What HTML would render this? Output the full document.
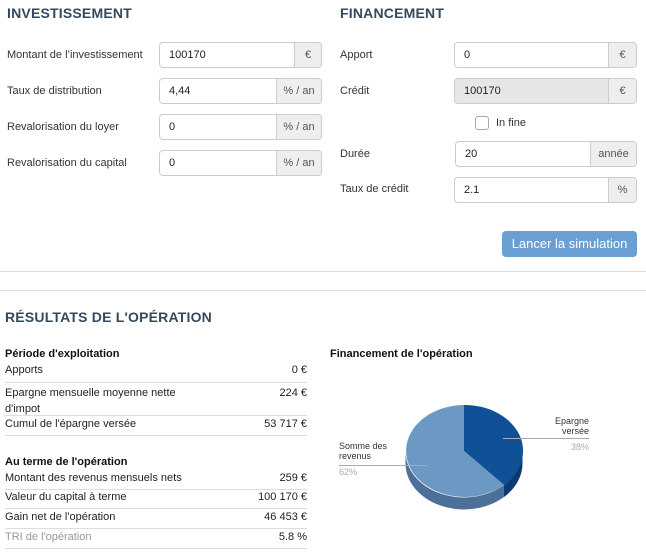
<!DOCTYPE html>
<html><head><meta charset="utf-8"><style>
*{margin:0;padding:0;box-sizing:border-box}
body{width:646px;height:555px;background:#fff;font-family:"Liberation Sans",sans-serif;color:#333;position:relative;overflow:hidden;font-size:11px}
.a{position:absolute;white-space:nowrap}
h2{position:absolute;font-size:14px;font-weight:bold;color:#34495e;letter-spacing:.2px}
.lbl{position:absolute;font-size:11px;color:#333}
.in{position:absolute;height:26px;border:1px solid #ccc;border-radius:4px;background:#fff;overflow:hidden}
.in span.v{position:absolute;left:9px;top:6px;font-size:11px;color:#222}
.in .ad{position:absolute;right:0;top:0;bottom:0;background:#eee;border-left:1px solid #ccc;font-size:11px;color:#555;text-align:center;line-height:24px}
.row{position:absolute;left:5px;width:302px;border-bottom:1px solid #ddd;font-size:11px;color:#222}
.row b{font-weight:normal}
.row i{font-style:normal;position:absolute;right:0;top:0}
</style></head><body>
<h2 style="left:7px;top:5px">INVESTISSEMENT</h2>
<h2 style="left:340px;top:5px">FINANCEMENT</h2>

<div class="lbl" style="left:7px;top:49px">Montant de l’investissement</div>
<div class="in" style="left:159px;top:42px;width:163px"><span class="v">100170</span><div class="ad" style="width:27px">€</div></div>
<div class="lbl" style="left:7px;top:85px">Taux de distribution</div>
<div class="in" style="left:159px;top:78px;width:163px"><span class="v">4,44</span><div class="ad" style="width:45px">% / an</div></div>
<div class="lbl" style="left:7px;top:121px">Revalorisation du loyer</div>
<div class="in" style="left:159px;top:114px;width:163px"><span class="v">0</span><div class="ad" style="width:45px">% / an</div></div>
<div class="lbl" style="left:7px;top:157px">Revalorisation du capital</div>
<div class="in" style="left:159px;top:150px;width:163px"><span class="v">0</span><div class="ad" style="width:45px">% / an</div></div>

<div class="lbl" style="left:340px;top:49px">Apport</div>
<div class="in" style="left:454px;top:42px;width:183px"><span class="v">0</span><div class="ad" style="width:28px">€</div></div>
<div class="lbl" style="left:340px;top:85px">Crédit</div>
<div class="in" style="left:454px;top:78px;width:183px;background:#e6e6e6"><span class="v">100170</span><div class="ad" style="width:28px">€</div></div>
<div class="a" style="left:475px;top:116px;width:14px;height:14px;border:1px solid #aaa;border-radius:3px"></div>
<div class="lbl" style="left:496px;top:117px">In fine</div>
<div class="lbl" style="left:340px;top:148px">Durée</div>
<div class="in" style="left:455px;top:141px;width:182px"><span class="v">20</span><div class="ad" style="width:46px">année</div></div>
<div class="lbl" style="left:340px;top:183px">Taux de crédit</div>
<div class="in" style="left:454px;top:177px;width:183px"><span class="v">2.1</span><div class="ad" style="width:28px">%</div></div>
<div class="a" style="left:502px;top:231px;width:135px;height:26px;background:#6a9fd3;border-radius:4px;color:#fff;font-size:13px;text-align:center;line-height:26px">Lancer la simulation</div>

<div class="a" style="left:0;top:271px;width:646px;height:1px;background:#ddd"></div>
<div class="a" style="left:0;top:290px;width:646px;height:1px;background:#ddd"></div>

<h2 style="left:5px;top:309px">RÉSULTATS DE L'OPÉRATION</h2>
<div class="a" style="left:5px;top:348px;font-weight:bold;font-size:11px;color:#111">Période d'exploitation</div>
<div class="row" style="top:364px;height:19px"><b>Apports</b><i>0 €</i></div>
<div class="row" style="top:385px;height:31px;line-height:16px"><b>Epargne mensuelle moyenne nette<br>d'impot</b><i>224 €</i></div>
<div class="row" style="top:418px;height:18px"><b>Cumul de l'épargne versée</b><i>53 717 €</i></div>
<div class="a" style="left:5px;top:456px;font-weight:bold;font-size:11px;color:#111">Au terme de l'opération</div>
<div class="row" style="top:472px;height:18px"><b>Montant des revenus mensuels nets</b><i>259 €</i></div>
<div class="row" style="top:491px;height:18px"><b>Valeur du capital à terme</b><i>100 170 €</i></div>
<div class="row" style="top:511px;height:18px"><b>Gain net de l'opération</b><i>46 453 €</i></div>
<div class="row" style="top:531px;height:18px"><b style="color:#999">TRI de l'opération</b><i>5.8 %</i></div>

<div class="a" style="left:330px;top:348px;font-weight:bold;font-size:11px;color:#111">Financement de l'opération</div>
<svg class="a" style="left:0;top:0" width="646" height="555">
<path d="M522.5,451 L522.5,463 A58.5,46 0 0,1 504,497 L504,485 A58.5,46 0 0,0 522.5,451 Z" fill="#0b3a72"/>
<path d="M504,485 L504,497 A58.5,46 0 0,1 405.5,463 L405.5,451 A58.5,46 0 0,0 504,485 Z" fill="#4d7099"/>
<path d="M464,451 L464,405 A58.5,46 0 0,1 504,485 Z" fill="#0f5096"/>
<path d="M464,451 L504,485 A58.5,46 0 1,1 464,405 Z" fill="#6c98c4"/>
<line x1="503" y1="438.5" x2="589" y2="438.5" stroke="#aaa"/>
<line x1="339" y1="465.5" x2="427" y2="465.5" stroke="#aaa"/>
<g font-family="Liberation Sans,sans-serif" font-size="9">
<text x="589" y="424" text-anchor="end" fill="#333">Epargne</text>
<text x="589" y="434" text-anchor="end" fill="#333">versée</text>
<text x="589" y="450" text-anchor="end" fill="#aaa">38%</text>
<text x="339" y="449" fill="#333">Somme des</text>
<text x="339" y="459" fill="#333">revenus</text>
<text x="339" y="475" fill="#aaa">62%</text>
</g>
</svg>
</body></html>
